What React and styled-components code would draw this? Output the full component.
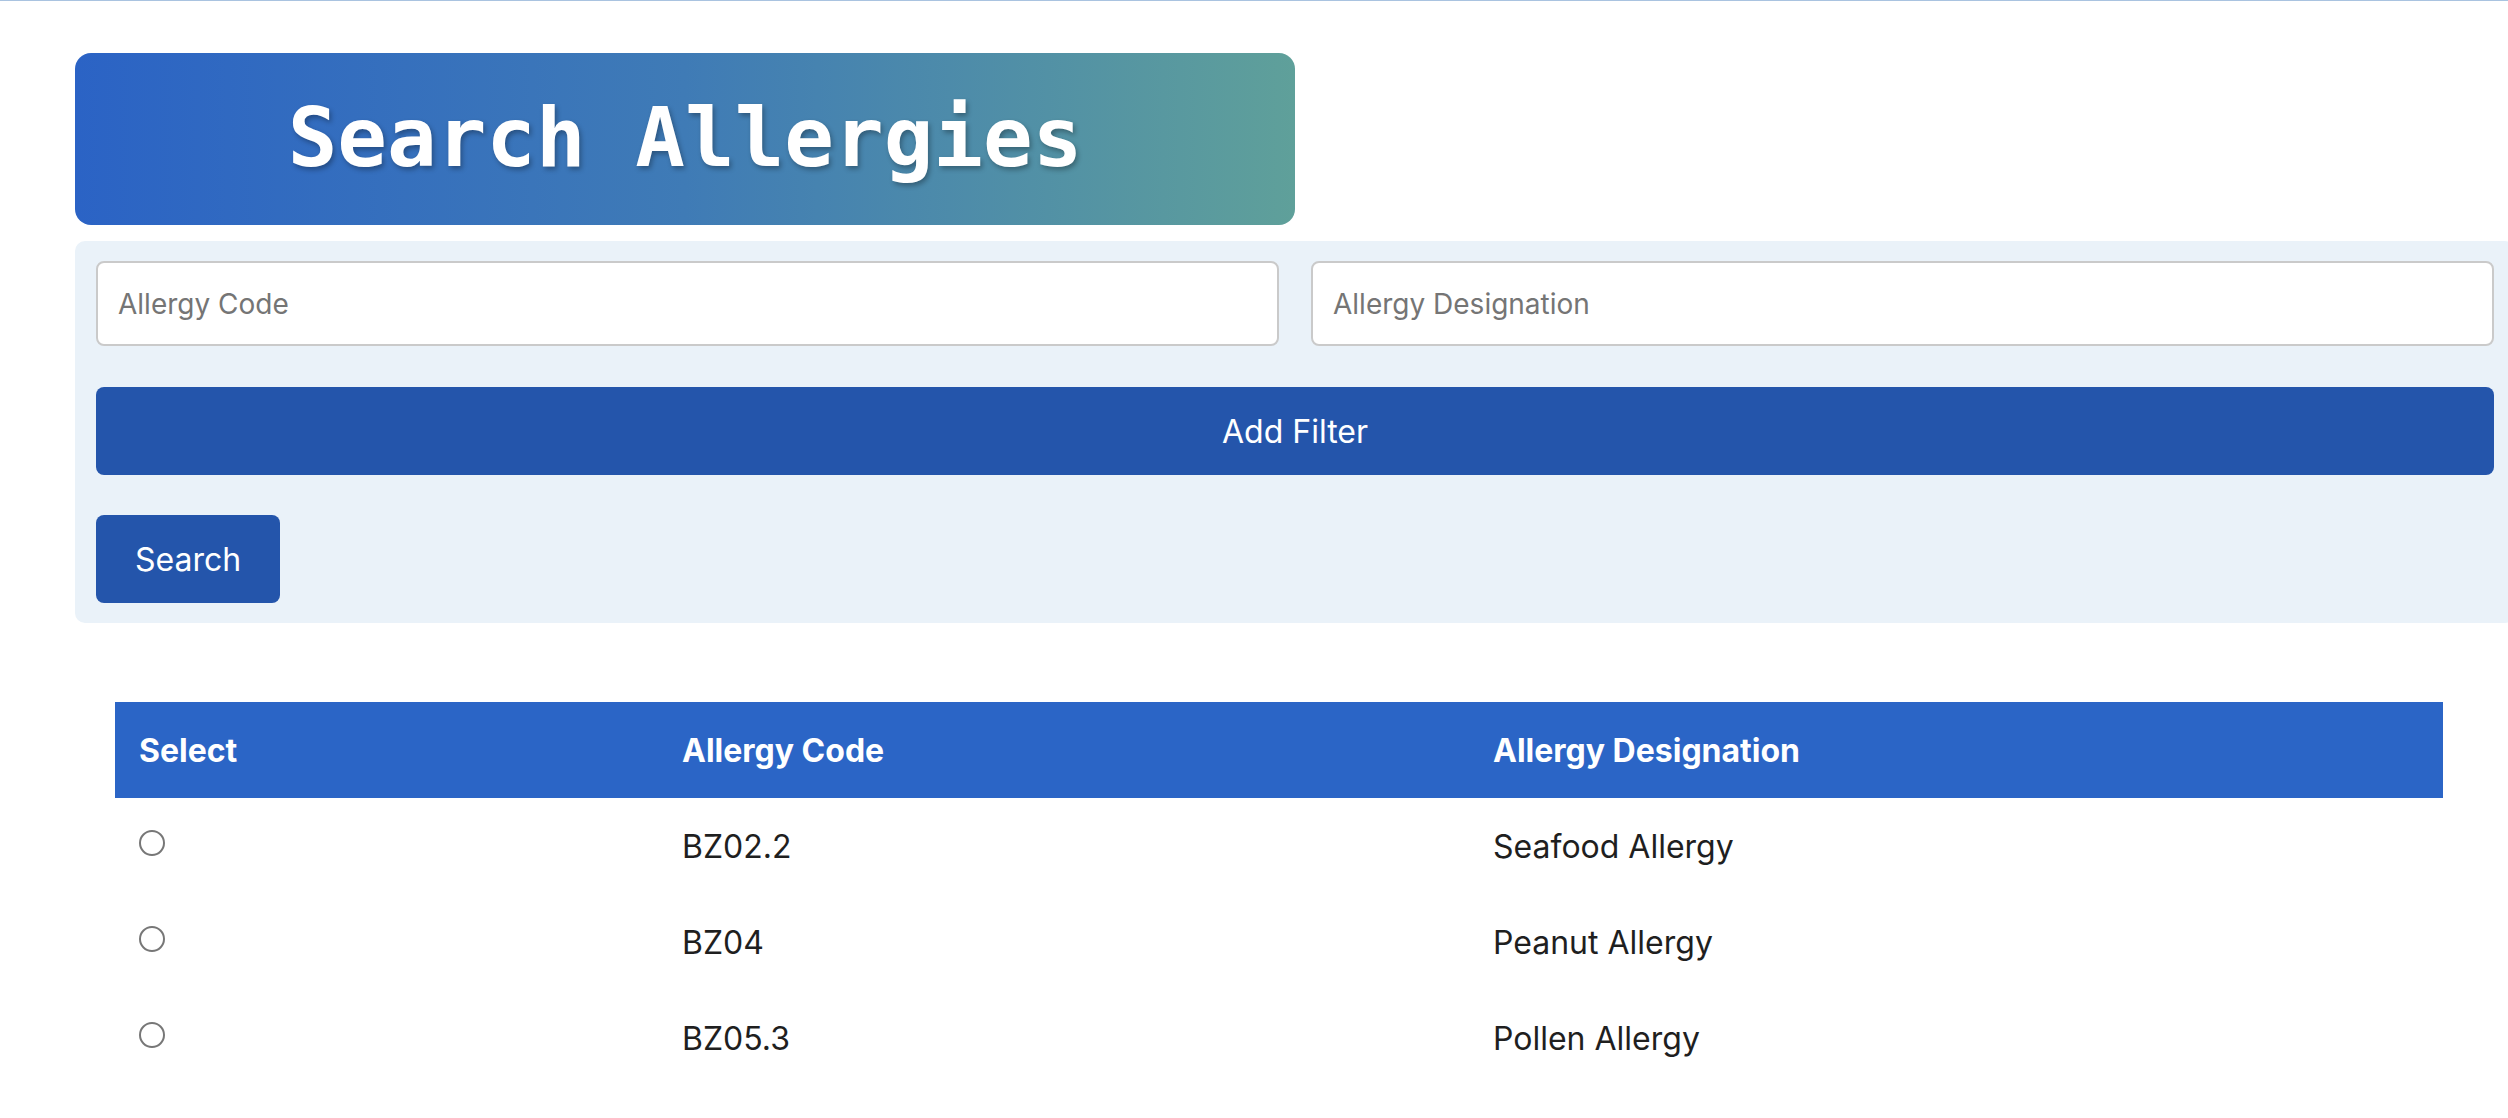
import React from "react";
import styled, { createGlobalStyle } from "styled-components";

const Global = createGlobalStyle`
  html, body { margin: 0; padding: 0; background: #ffffff; overflow: hidden; }
  body { font-family: Inter, "Noto Sans", sans-serif; }
  * { box-sizing: border-box; }
`;

const Page = styled.div`
  border-top: 1px solid #a9c3e0;
  padding: 52px 0 0 75px;
  width: 2508px;
  height: 1118px;
`;

const Banner = styled.div`
  width: 1220px;
  height: 172px;
  border-radius: 16px;
  background: linear-gradient(90deg, #2b63c5 0%, #3f7bb6 50%, #5fa09a 100%);
  display: flex;
  align-items: center;
  justify-content: center;
`;

const Title = styled.h1`
  margin: 0 0 3px 0;
  color: #ffffff;
  font-family: "DejaVu Sans Mono", "Liberation Mono", monospace;
  font-weight: 700;
  font-size: 82.5px;
  line-height: 1;
  text-shadow: 2px 3px 5px rgba(0, 0, 0, 0.3);
`;

const Panel = styled.div`
  margin-top: 16px;
  width: 2440px;
  background: #eaf2f9;
  border-radius: 10px;
  padding: 20px 21px 20px 21px;
`;

const FieldRow = styled.div`
  display: grid;
  grid-template-columns: 1fr 1fr;
  gap: 32px;
`;

const Field = styled.input`
  height: 85px;
  border: 2px solid #cacaca;
  border-radius: 8px;
  background: #ffffff;
  padding: 0 20px;
  font-family: Inter, sans-serif;
  font-size: 28px;
  color: #222;
  outline: none;
  &::placeholder { color: #757575; }
`;

const Button = styled.button`
  display: block;
  height: 88px;
  border: none;
  border-radius: 8px;
  background: #2455ab;
  color: #ffffff;
  font-family: Inter, sans-serif;
  font-size: 32px;
  cursor: pointer;
  width: ${(p) => (p.$full ? "100%" : "auto")};
  padding: 0 ${(p) => (p.$full ? "0" : "39px")};
  margin-top: ${(p) => p.$gap}px;
`;

const Table = styled.table`
  margin: 79px 0 0 40px;
  width: 2328px;
  border-collapse: collapse;
  table-layout: fixed;
  font-family: Inter, sans-serif;
`;

const HeadCell = styled.th`
  background: #2b65c6;
  color: #ffffff;
  font-weight: 700;
  font-size: 32px;
  text-align: left;
  height: 96px;
  padding: 0 24px;
  width: ${(p) => p.$w}px;
`;

const Cell = styled.td`
  height: 96px;
  padding: 0 24px;
  font-size: 32px;
  color: #1f1f1f;
  vertical-align: middle;
`;

const Radio = styled.input.attrs({ type: "radio" })`
  appearance: none;
  -webkit-appearance: none;
  width: 26px;
  height: 26px;
  margin: 0;
  border: 2px solid #777777;
  border-radius: 50%;
  background: #fff;
  display: block;
  transform: translateY(-3px);
`;

const rows = [
  { code: "BZ02.2", name: "Seafood Allergy" },
  { code: "BZ04", name: "Peanut Allergy" },
  { code: "BZ05.3", name: "Pollen Allergy" },
];

export default function App() {
  return (
    <Page>
      <Global />
      <Banner>
        <Title>Search Allergies</Title>
      </Banner>
      <Panel>
        <FieldRow>
          <Field placeholder="Allergy Code" />
          <Field placeholder="Allergy Designation" />
        </FieldRow>
        <Button $full $gap={41}>Add Filter</Button>
        <Button $gap={40}>Search</Button>
      </Panel>
      <Table>
        <thead>
          <tr>
            <HeadCell $w={543}>Select</HeadCell>
            <HeadCell $w={811}>Allergy Code</HeadCell>
            <HeadCell $w={974}>Allergy Designation</HeadCell>
          </tr>
        </thead>
        <tbody>
          {rows.map((r) => (
            <tr key={r.code}>
              <Cell><Radio name="allergy" /></Cell>
              <Cell>{r.code}</Cell>
              <Cell>{r.name}</Cell>
            </tr>
          ))}
        </tbody>
      </Table>
    </Page>
  );
}
